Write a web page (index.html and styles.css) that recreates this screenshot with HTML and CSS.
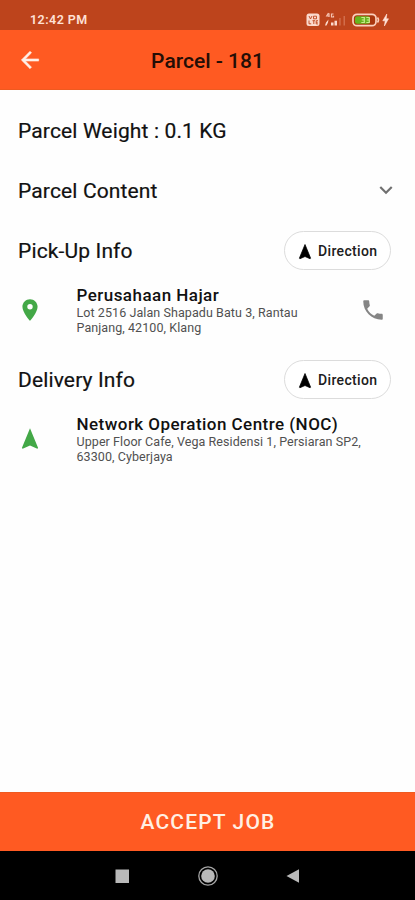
FILE: index.html
```html
<!DOCTYPE html>
<html lang="en">
<head>
<meta charset="utf-8">
<title>Parcel - 181</title>
<link rel="stylesheet" href="styles.css">
</head>
<body>
<div class="screen">
  <div class="status">
    <span class="clock">12:42 PM</span>
    <svg class="indicators" width="84" height="16" viewBox="0 0 84 16">
      <rect x="0.5" y="1.5" width="13" height="12.5" rx="2.500" fill="#fbd9cc"/>
      <path d="M3 4l1.500 3L6 4M7.500 4.200h3v2.600h-3zM3 8.500v3.300h2.200M6.500 8.700h2.600M7.800 8.700v3.300M12 8.700h-1.800v3.200H12M10.200 10.300h1.500" fill="none" stroke="#bd441c" stroke-width="0.900"/>
      <path d="M22.500 1L20.700 4h3M23 1.200V5M27.500 2H25.500v3h2V3.700" fill="none" stroke="#f5c3b1" stroke-width="1.200"/>
      <path d="M19 13.500l1-3 2.500-3-.5 3-1.500 3z M25 13.500v-3h2.500v3zM28.500 13.500V8.800H31v4.700z" fill="#fbd9cc"/>
      <path d="M33.200 13.500V6h1.500v7.500zM37.500 13.500V4H39v9.500z" fill="#d16d4b"/>
      <rect x="47" y="2.300" width="23" height="11.400" rx="4" fill="#a9370f" stroke="#fbd0bd" stroke-width="1.700"/>
      <rect x="49" y="4.300" width="15" height="7.400" rx="2" fill="#67b51d"/>
      <path d="M71.500 5.500q2 2.500 0 5" fill="none" stroke="#fbd0bd" stroke-width="1.500"/>
      <path d="M55.300 5.500h3v5h-3M55.800 8h2.500M60.300 5.500h3v5h-3M60.800 8h2.500" fill="none" stroke="#c8ec8c" stroke-width="1.200"/>
      <path d="M80.800 2L76.800 8.800h2.400L78.400 14 82.500 6.800H80.200z" fill="#ffe3d8" stroke="#ffe3d8" stroke-width="0.600"/>
    </svg>
  </div>
  <header class="appbar">
    <svg class="icon back" viewBox="0 0 24 24"><path d="M20 11H7.830l5.590-5.590L12 4l-8 8 8 8 1.410-1.410L7.830 13H20z"/></svg>
    <h1 class="title">Parcel - 181</h1>
  </header>
  <main class="content">
    <div class="row weight"><h2 class="heading">Parcel Weight : 0.1 KG</h2></div>
    <div class="row expand">
      <h2 class="heading">Parcel Content</h2>
      <svg class="icon chevron" viewBox="0 0 24 24"><path d="M16.590 8.590L12 13.170 7.410 8.590 6 10l6 6 6-6z"/></svg>
    </div>
    <section class="stop">
      <div class="row stop-head">
        <h2 class="heading">Pick-Up Info</h2>
        <button class="direction"><svg class="nav" viewBox="0 0 24 24"><path d="M12 2L4.500 20.290l.71.71L12 18l6.790 3 .71-.71z"/></svg><span>Direction</span></button>
      </div>
      <div class="place">
        <svg class="icon green" viewBox="0 0 24 24"><path d="M12 2C8.130 2 5 5.130 5 9c0 5.250 7 13 7 13s7-7.750 7-13c0-3.870-3.130-7-7-7zm0 9.500a2.500 2.500 0 0 1 0-5 2.500 2.500 0 0 1 0 5z"/></svg>
        <div class="details">
          <h3 class="name">Perusahaan Hajar</h3>
          <p class="address">Lot 2516 Jalan Shapadu Batu 3, Rantau<br>Panjang, 42100, Klang</p>
        </div>
        <svg class="icon phone" viewBox="0 0 24 24"><path d="M6.620 10.790c1.440 2.830 3.760 5.140 6.590 6.590l2.200-2.200c.27-.27.67-.36 1.020-.24 1.120.37 2.330.57 3.570.57.55 0 1 .45 1 1V20c0 .55-.45 1-1 1-9.390 0-17-7.610-17-17 0-.55.45-1 1-1h3.500c.55 0 1 .45 1 1 0 1.250.2 2.450.57 3.570.11.35.03.74-.25 1.020z"/></svg>
      </div>
    </section>
    <section class="stop">
      <div class="row stop-head">
        <h2 class="heading">Delivery Info</h2>
        <button class="direction"><svg class="nav" viewBox="0 0 24 24"><path d="M12 2L4.500 20.290l.71.71L12 18l6.790 3 .71-.71z"/></svg><span>Direction</span></button>
      </div>
      <div class="place">
        <svg class="icon green" viewBox="0 0 24 24"><path d="M12 2L4.500 20.290l.71.71L12 18l6.790 3 .71-.71z"/></svg>
        <div class="details">
          <h3 class="name">Network Operation Centre (NOC)</h3>
          <p class="address">Upper Floor Cafe, Vega Residensi 1, Persiaran SP2,<br>63300, Cyberjaya</p>
        </div>
      </div>
    </section>
  </main>
  <button class="accept">ACCEPT JOB</button>
  <nav class="system">
    <svg width="22" height="22" viewBox="0 0 22 22"><rect x="4.500" y="4.500" width="13.500" height="13.500" fill="#b9b9b9"/></svg>
    <svg width="22" height="22" viewBox="0 0 22 22"><circle cx="11" cy="11" r="9.200" fill="none" stroke="#a5a5a5" stroke-width="1.300"/><circle cx="11" cy="11" r="6.800" fill="#b9b9b9"/></svg>
    <svg width="22" height="22" viewBox="0 0 22 22"><path d="M4.500 11L17 4.200v13.600z" fill="#b9b9b9"/></svg>
  </nav>
</div>
</body>
</html>
```
FILE: styles.css
```css
* { box-sizing: border-box; }
body, h1, h2, h3, p { margin: 0; font-weight: 400; }
body { font-family: Roboto, sans-serif; background: #fefefe; color: #111; }
button { font-family: inherit; border: 0; padding: 0; margin: 0; color: inherit; }
svg { display: block; flex: none; }

.screen { display: flex; flex-direction: column; width: 415px; height: 900px; overflow: hidden; }

.status {
  display: flex; align-items: center; justify-content: space-between; flex: none;
  height: 30px; padding: 9px 25px 0 30px; background: #bd441c; color: #ffe1d6;
}
.clock { font-size: 12.5px; font-weight: 600; line-height: 20px; letter-spacing: 0.45px; }

.appbar {
  display: flex; align-items: center; height: 59.5px; flex: none;
  padding: 2px 17px 0; background: #ff5a22; border-bottom: 1px solid #ef5a20;
}
.icon { width: 26px; height: 26px; fill: currentColor; }
.back { color: #fff0e8; stroke: currentColor; stroke-width: 0.5; }
.title {
  flex: 1; padding: 2px 26px 0 0; text-align: center; color: #240e06;
  font-size: 21px; font-weight: 500; line-height: 28px;
}

.content { flex: 1; padding: 0 17px 0 18px; }
.row { display: flex; align-items: center; justify-content: space-between; }
.heading { font-size: 21px; line-height: 28px; letter-spacing: 0.14px; -webkit-text-stroke: 0.2px #111; }
.weight { height: 82px; }
.expand { height: 38px; }
.chevron { margin: -2px -1px 0 0; color: #707070; }
.stop { height: 129px; padding-top: 21px; }
.stop-head { height: 40px; padding-right: 7px; }

.direction {
  display: flex; align-items: center; gap: 4px; width: 107px; height: 39px;
  padding-left: 11px; border: 1px solid #dcdcdc; border-radius: 20px;
  background: #fff; color: #202020; font-size: 14px; font-weight: 500; letter-spacing: 0.34px;
}
.nav { width: 18px; height: 18px; margin-top: 2px; fill: #000; stroke: #000; stroke-width: 1; }

.place { display: flex; align-items: center; margin-top: 14px; padding-right: 12px; height: 50px; }
.green { color: #43a847; margin-left: -1px; }
.details { flex: 1; padding: 1px 0 0 33.5px; }
.name { font-size: 17px; line-height: 19px; letter-spacing: 0.46px; font-weight: 500; white-space: nowrap; }
.address { font-size: 12.5px; line-height: 15px; letter-spacing: 0.08px; color: #505050; white-space: nowrap; }
.phone { color: #858585; }

.accept {
  flex: none; height: 59px; background: #ff5a22; color: #fff0e4;
  border-top: 1px solid #ef5a20;
  font-size: 21px; font-weight: 500; letter-spacing: 1.15px; padding-left: 1px;
}
.system {
  display: flex; align-items: center; justify-content: space-between;
  flex: none; height: 49.5px; padding: 1px 111px 0; background: #000;
}
```
